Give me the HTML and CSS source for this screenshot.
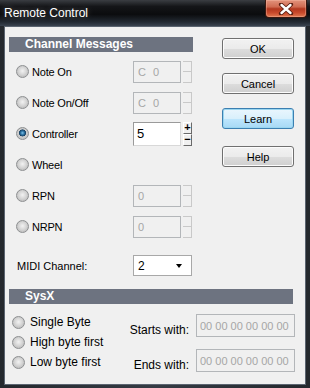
FILE: index.html
```html
<!DOCTYPE html>
<html lang="en">
<head>
    <meta charset="UTF-8">
    <meta name="viewport" content="width=device-width, initial-scale=1.0">
    <title>Remote Control</title>
    <link rel="stylesheet" href="styles.css">
</head>
<body>
    <div class="window">
        <div class="titlebar">
            <span class="title">Remote Control</span>
            <div class="close">
                <svg width="16" height="12" viewBox="0 0 16 12">
                    <path d="M3 1.5 L13 10.5 M13 1.5 L3 10.5" stroke="#5a1f12" stroke-width="4.2" stroke-linecap="round"/>
                    <path d="M3.5 2 L12.5 10 M12.5 2 L3.5 10" stroke="#fff" stroke-width="2.4" stroke-linecap="round"/>
                </svg>
            </div>
        </div>

        <div class="client">
            <div class="top">
                <div class="channel">
                    <div class="group-head">Channel Messages</div>

                    <div class="row">
                        <label class="opt"><span class="radio"></span>Note On</label>
                        <div class="field off">C 0</div>
                        <div class="spin off"><span></span><span></span></div>
                    </div>
                    <div class="row">
                        <label class="opt"><span class="radio"></span>Note On/Off</label>
                        <div class="field off">C 0</div>
                        <div class="spin off"><span></span><span></span></div>
                    </div>
                    <div class="row">
                        <label class="opt"><span class="radio checked"></span>Controller</label>
                        <div class="field on">5</div>
                        <div class="spin on"><span>+</span><span>&minus;</span></div>
                    </div>
                    <div class="row">
                        <label class="opt"><span class="radio"></span>Wheel</label>
                    </div>
                    <div class="row">
                        <label class="opt"><span class="radio"></span>RPN</label>
                        <div class="field off">0</div>
                        <div class="spin off"><span></span><span></span></div>
                    </div>
                    <div class="row">
                        <label class="opt"><span class="radio"></span>NRPN</label>
                        <div class="field off">0</div>
                        <div class="spin off"><span></span><span></span></div>
                    </div>

                    <div class="midi">
                        <span class="midi-label">MIDI Channel:</span>
                        <div class="combo"><span>2</span><span class="arrow"></span></div>
                    </div>
                </div>

                <div class="buttons">
                    <button class="btn">OK</button>
                    <button class="btn">Cancel</button>
                    <button class="btn focus">Learn</button>
                    <button class="btn help">Help</button>
                </div>
            </div>

            <div class="group-head wide">SysX</div>

            <div class="sysx">
                <div class="sysx-opts">
                    <label class="sopt"><span class="radio"></span>Single Byte</label>
                    <label class="sopt"><span class="radio"></span>High byte first</label>
                    <label class="sopt"><span class="radio"></span>Low byte first</label>
                </div>
                <div class="ranges">
                    <div class="range">
                        <span class="range-label">Starts with:</span>
                        <div class="field off hex">00 00 00 00 00 00</div>
                    </div>
                    <div class="range">
                        <span class="range-label">Ends with:</span>
                        <div class="field off hex">00 00 00 00 00 00</div>
                    </div>
                </div>
            </div>
        </div>
    </div>
</body>
</html>
```

FILE: styles.css
```css
* {
    box-sizing: border-box;
    margin: 0;
    padding: 0;
}

body {
    font-family: 'Liberation Sans', Arial, sans-serif;
    font-size: 11px;
    color: #000;
    background: #000;
}

.window {
    width: 310px;
    height: 388px;
    display: flex;
    flex-direction: column;
    padding: 0 4px 3px 4px;
    background: linear-gradient(90deg, #24282d, #353b44 50%, #24282d);
}

.titlebar {
    height: 26px;
    margin: 0 -4px;
    display: flex;
    align-items: flex-start;
    background: linear-gradient(#3a3d42 0, #141518 25%, #0b0c0e 55%, #232a33 85%, #3a4350 100%);
}

.title {
    color: #fff;
    font-size: 12px;
    line-height: 26px;
    padding-left: 4px;
    text-shadow: 0 0 6px rgba(255,255,255,0.35);
}

.close {
    margin-left: auto;
    margin-right: 3px;
    width: 42px;
    height: 18px;
    display: flex;
    align-items: center;
    justify-content: center;
    border: 1px solid #3a1810;
    border-top: none;
    border-radius: 0 0 4px 4px;
    box-shadow: inset 0 0 0 1px rgba(255,200,180,0.35);
    background: linear-gradient(#e2937c 0, #d06c52 40%, #b2381f 52%, #c94a2c 75%, #e17a52 100%);
}

.client {
    flex: 1;
    background: #f0f0f0;
    border: 1px solid #5b6470;
    padding: 10px 10px 0 4px;
}

.top {
    display: flex;
}

.channel {
    width: 184px;
}

.group-head {
    height: 15px;
    background: #6d7380;
    color: #fff;
    font-weight: bold;
    font-size: 12px;
    line-height: 15px;
    padding-left: 16px;
}

.group-head.wide {
    width: 284px;
    margin-top: 13px;
}

.row {
    height: 31px;
    display: flex;
    align-items: center;
}

.channel .group-head + .row {
    margin-top: 4px;
}

.opt {
    width: 124px;
    display: flex;
    align-items: center;
    padding-left: 7px;
    letter-spacing: -0.2px;
}

.radio {
    width: 13px;
    height: 13px;
    border-radius: 50%;
    border: 1px solid #8d8f91;
    margin-right: 3px;
    flex-shrink: 0;
    background: radial-gradient(circle at 50% 45%, #f2f2f2 0, #d6d6d6 45%, #c4c4c4 70%, #e6e6e6 100%);
}

.radio.checked {
    background: radial-gradient(circle at 50% 45%, #7fc2ea 0, #2f76a6 22%, #173f61 40%, #cfcfcf 46%, #c6c6c6 70%, #e6e6e6 100%);
}

.field {
    width: 48px;
    height: 22px;
    border: 1px solid #b3b6b9;
    padding-left: 4px;
    display: flex;
    align-items: center;
}

.field.off {
    color: #a6a6a6;
    letter-spacing: 2px;
    background: #f0f0f0;
}

.field.on {
    height: 24px;
    background: #fff;
    border-color: #9a9a9a #d8d8d8 #d8d8d8 #9a9a9a;
    font-size: 13px;
    padding-left: 3px;
}

.spin {
    width: 9px;
    margin-left: 2px;
    display: flex;
    flex-direction: column;
}

.spin span {
    height: 11px;
    display: flex;
    align-items: center;
    justify-content: center;
}

.spin.off {
    height: 22px;
}

.spin.off span {
    border: 1px solid #c9c9c9;
    border-left: none;
}

.spin.off span + span {
    border-top: none;
}

.spin.on span {
    height: 12px;
    font-size: 11px;
    font-weight: bold;
    line-height: 1;
    border: 1px solid;
    border-color: #fff #6a6a6a #6a6a6a #fff;
}

.midi {
    margin-top: 13px;
    height: 21px;
    display: flex;
    align-items: center;
}

.midi-label {
    width: 124px;
    padding-left: 8px;
}

.combo {
    width: 59px;
    height: 21px;
    background: #fff;
    border: 1px solid #a8a8a8;
    display: flex;
    align-items: center;
    padding-left: 4px;
    font-size: 12px;
}

.arrow {
    margin-left: auto;
    margin-right: 9px;
    width: 0;
    height: 0;
    border-left: 3.5px solid transparent;
    border-right: 3.5px solid transparent;
    border-top: 4px solid #000;
}

.buttons {
    margin-left: 29px;
    padding-top: 1px;
    display: flex;
    flex-direction: column;
    gap: 14px;
}

.btn {
    width: 72px;
    height: 21px;
    font-family: 'Liberation Sans', Arial, sans-serif;
    font-size: 11px;
    color: #000;
    border: 1px solid #707070;
    border-radius: 3px;
    box-shadow: inset 0 0 0 1px #fcfcfc;
    background: linear-gradient(#f2f2f2 0, #ebebeb 50%, #dddddd 51%, #cfcfcf 100%);
}

.btn.focus {
    border-color: #3c7fb1;
    box-shadow: inset 0 0 0 1px #9ad6f0;
    background: linear-gradient(#eaf6fd 0, #d9f0fc 50%, #bee6fd 51%, #a7d9f5 100%);
}

.btn.help {
    margin-top: 3px;
}

.sysx {
    display: flex;
    width: 286px;
}

.sysx-opts {
    padding-top: 8px;
    display: flex;
    flex-direction: column;
}

.sopt {
    height: 20px;
    display: flex;
    align-items: center;
    padding-left: 3px;
    font-size: 12px;
}

.sopt .radio {
    margin-right: 5px;
}

.ranges {
    margin-left: auto;
    padding-top: 10px;
    display: flex;
    flex-direction: column;
    gap: 12px;
}

.range {
    display: flex;
    align-items: flex-end;
    justify-content: flex-end;
}

.range-label {
    font-size: 12px;
    margin-right: 7px;
}

.field.hex {
    width: 99px;
    height: 23px;
    letter-spacing: 0;
    font-size: 11px;
    padding-left: 3px;
}
```
